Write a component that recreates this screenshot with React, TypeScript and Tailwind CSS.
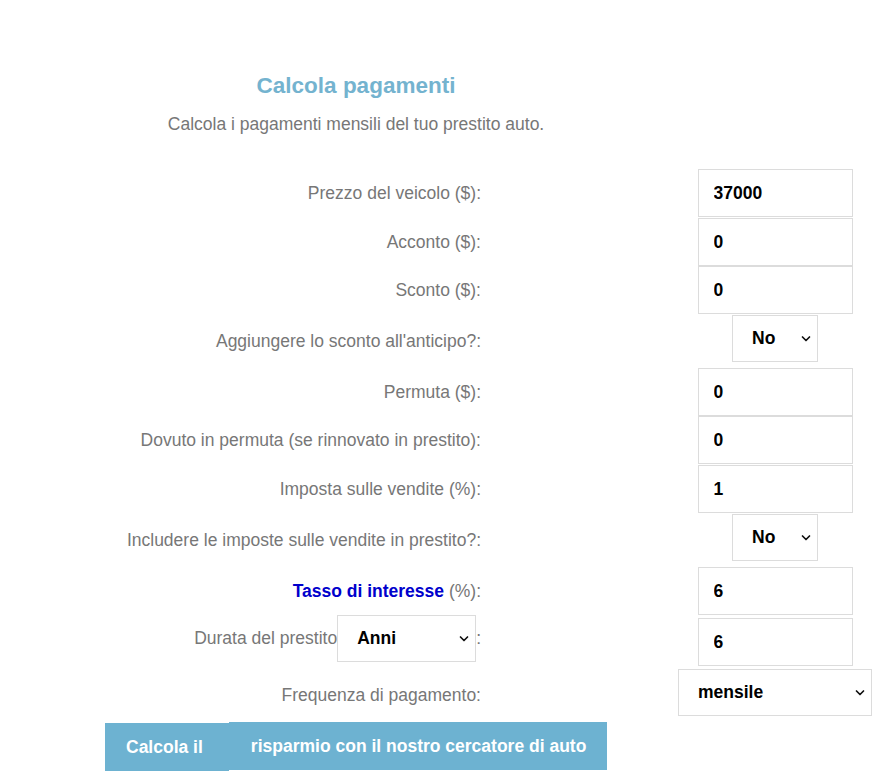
import React from "react";

const font = { fontFamily: '"Liberation Sans", Arial, sans-serif' };

function Chevron() {
  return (
    <svg
      className="pointer-events-none absolute right-[7px] top-1/2 -translate-y-1/2"
      width="10"
      height="7"
      viewBox="0 0 10 7"
      fill="none"
    >
      <path d="M1.5 1.5 L5 5 L8.5 1.5" stroke="#111" strokeWidth="1.7" strokeLinecap="round" strokeLinejoin="round" />
    </svg>
  );
}

function Sel({ w, value, options }: { w: string; value: string; options: string[] }) {
  return (
    <div className={`relative ${w} h-[47px]`}>
      <select
        defaultValue={value}
        className="appearance-none w-full h-full border border-[#dcdcdc] bg-white pl-[19px] pr-[20px] text-[17.5px] font-bold text-black outline-none"
        style={font}
      >
        {options.map((o) => (
          <option key={o}>{o}</option>
        ))}
      </select>
      <Chevron />
    </div>
  );
}

function Inp({ value }: { value: string }) {
  return (
    <input
      readOnly
      value={value}
      className="w-[155px] h-[48px] border border-[#dcdcdc] bg-white pl-[15px] text-[17.5px] font-bold text-black outline-none"
      style={font}
    />
  );
}

function Row({
  label,
  h,
  children,
  mt = "mt-0",
}: {
  label: React.ReactNode;
  h: string;
  children: React.ReactNode;
  mt?: string;
}) {
  return (
    <div className={`grid grid-cols-[481px_197px_194px] ${h}`}>
      <div className="flex items-center justify-end text-[17.5px] text-[#777777]">{label}</div>
      <div />
      <div className={`flex justify-center items-start ${mt}`}>{children}</div>
    </div>
  );
}

export default function App() {
  return (
    <div className="w-[884px] min-h-[783px] bg-white" style={font}>
      <div className="w-[712px] pt-[72px] text-center">
        <h2 className="text-[22.5px] leading-[28px] font-bold text-[#74b3cf]">Calcola pagamenti</h2>
        <p className="mt-[14px] text-[17.5px] leading-[20px] text-[#777777]">
          Calcola i pagamenti mensili del tuo prestito auto.
        </p>
      </div>
      <div className="mt-[35px] flex flex-col">
        <Row label="Prezzo del veicolo ($):" h="h-[49px]">
          <Inp value="37000" />
        </Row>
        <Row label="Acconto ($):" h="h-[48px]">
          <Inp value="0" />
        </Row>
        <Row label="Sconto ($):" h="h-[49px]">
          <Inp value="0" />
        </Row>
        <Row label="Aggiungere lo sconto all'anticipo?:" h="h-[53px]">
          <Sel w="w-[86px]" value="No" options={["No", "Sì"]} />
        </Row>
        <Row label="Permuta ($):" h="h-[48px]">
          <Inp value="0" />
        </Row>
        <Row label="Dovuto in permuta (se rinnovato in prestito):" h="h-[49px]">
          <Inp value="0" />
        </Row>
        <Row label="Imposta sulle vendite (%):" h="h-[49px]">
          <Inp value="1" />
        </Row>
        <Row label="Includere le imposte sulle vendite in prestito?:" h="h-[53px]">
          <Sel w="w-[86px]" value="No" options={["No", "Sì"]} />
        </Row>
        <Row
          label={
            <span>
              <a className="font-bold text-[#0000cc]" href="#">
                Tasso di interesse
              </a>{" "}
              (%):
            </span>
          }
          h="h-[48px]"
        >
          <Inp value="6" />
        </Row>
        <div className="grid grid-cols-[481px_197px_194px] h-[54px]">
          <div className="flex items-start justify-end text-[17.5px] text-[#777777]">
            <span className="h-[47px] flex items-center">Durata del prestito</span>
            <Sel w="w-[139px]" value="Anni" options={["Anni", "Mesi"]} />
            <span className="h-[47px] flex items-center">:</span>
          </div>
          <div />
          <div className="flex justify-center items-start mt-[3px]">
            <Inp value="6" />
          </div>
        </div>
        <Row label="Frequenza di pagamento:" h="h-[53px]">
          <Sel w="w-[194px]" value="mensile" options={["mensile", "bisettimanale", "settimanale"]} />
        </Row>
      </div>
      <div className="ml-[105px] flex items-start">
        <span className="mt-[1px] h-[48px] flex items-center bg-[#6db2d1] pl-[21px] pr-[26px] text-[17.5px] font-bold text-white">
          Calcola il
        </span>
        <span className="h-[48px] flex items-center bg-[#6db2d1] pl-[22px] pr-[21px] text-[17.5px] font-bold text-white">
          risparmio con il nostro cercatore di auto
        </span>
      </div>
    </div>
  );
}
